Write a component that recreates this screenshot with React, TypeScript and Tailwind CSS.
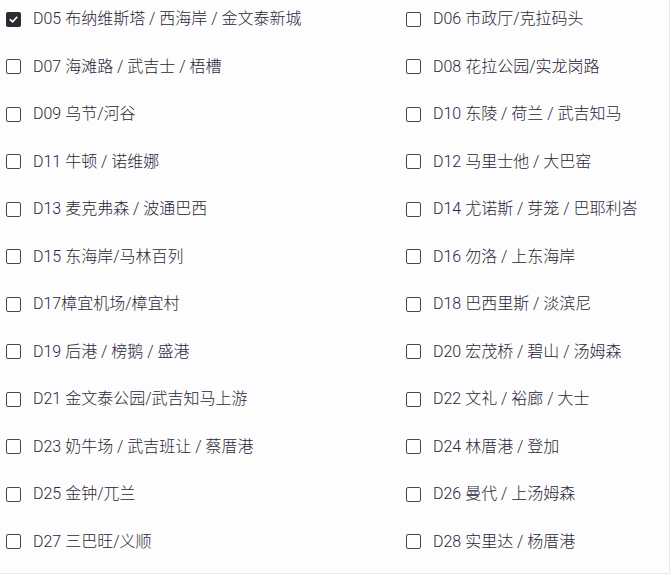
import React from "react";

const items: string[] = [
  "D05 布纳维斯塔 / 西海岸 / 金文泰新城",
  "D06 市政厅/克拉码头",
  "D07 海滩路 / 武吉士 / 梧槽",
  "D08 花拉公园/实龙岗路",
  "D09 乌节/河谷",
  "D10 东陵 / 荷兰 / 武吉知马",
  "D11 牛顿 / 诺维娜",
  "D12 马里士他 / 大巴窑",
  "D13 麦克弗森 / 波通巴西",
  "D14 尤诺斯 / 芽笼 / 巴耶利峇",
  "D15 东海岸/马林百列",
  "D16 勿洛 / 上东海岸",
  "D17樟宜机场/樟宜村",
  "D18 巴西里斯 / 淡滨尼",
  "D19 后港 / 榜鹅 / 盛港",
  "D20 宏茂桥 / 碧山 / 汤姆森",
  "D21 金文泰公园/武吉知马上游",
  "D22 文礼 / 裕廊 / 大士",
  "D23 奶牛场 / 武吉班让 / 蔡厝港",
  "D24 林厝港 / 登加",
  "D25 金钟/兀兰",
  "D26 曼代 / 上汤姆森",
  "D27 三巴旺/义顺",
  "D28 实里达 / 杨厝港",
];

function Box({ checked }: { checked: boolean }) {
  if (checked) {
    return (
      <span className="flex h-[15px] w-[15px] shrink-0 items-center justify-center rounded-[2px] bg-[#2e2a33]">
        <svg width="11" height="11" viewBox="0 0 12 12" fill="none">
          <path d="M2.5 6.2 L5 8.6 L9.6 3.6" stroke="#ffffff" strokeWidth="1.8" strokeLinecap="round" strokeLinejoin="round" />
        </svg>
      </span>
    );
  }
  return <span className="block h-[15px] w-[15px] shrink-0 rounded-[2px] border-[1.5px] border-[#4a4650] bg-white" />;
}

export default function App() {
  return (
    <div className="h-[574px] w-[670px] overflow-hidden border-r border-b border-[#e8e8ec] bg-[#fdfdfe]">
      <div className="grid grid-cols-[400px_1fr] gap-y-[23.5px] pl-[6px] pt-[7px]">
        {items.map((t, i) => (
          <div key={i} className="flex h-6 items-center gap-[12px]">
            <Box checked={i === 0} />
            <span
              className="whitespace-nowrap text-[16px] font-light leading-6 text-[#2c2536]"
              style={{ fontFamily: "Roboto, 'Noto Sans CJK SC', sans-serif" }}
            >
              {t}
            </span>
          </div>
        ))}
      </div>
    </div>
  );
}
